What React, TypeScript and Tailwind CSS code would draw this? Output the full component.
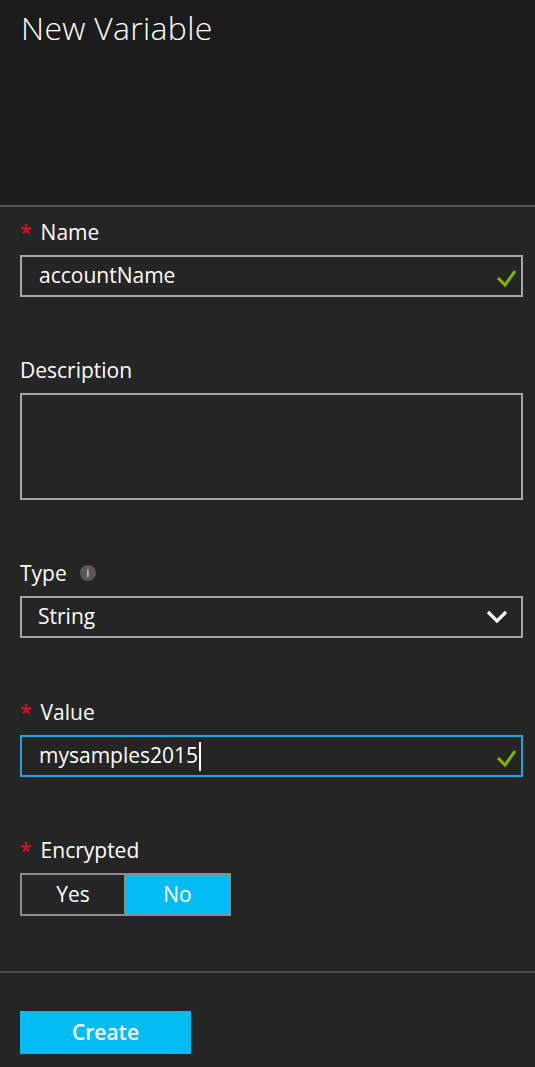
import React from "react";

function Check() {
  return (
    <svg width="20" height="18" viewBox="0 0 20 18" className="absolute right-[5px] top-[12px]">
      <polyline points="2,9 9,16 19,2" fill="none" stroke="#7fba00" strokeWidth="3" />
    </svg>
  );
}

function Label({ text, required, info }: { text: string; required?: boolean; info?: boolean }) {
  return (
    <div className="flex items-center h-[28px] leading-[28px] mb-[9px] text-[21px] text-white">
      {required && <span className="text-[#e81123] mr-[9px] text-[21px]">*</span>}
      <span>{text}</span>
      {info && (
        <span className="ml-[13px] w-[16px] h-[16px] rounded-full bg-[#595959] text-[#d0d0d0] text-[11px] leading-[16px] text-center font-semibold">
          i
        </span>
      )}
    </div>
  );
}

export default function App() {
  return (
    <div
      className="w-[535px] h-[1067px] bg-[#252525] text-white overflow-hidden"
      style={{ fontFamily: '"Open Sans", "Noto Sans", sans-serif' }}
    >
      {/* Blade header */}
      <div className="h-[207px] bg-[#1b1b1b] px-[21px] pt-[8px] border-b-2 border-[#555555]">
        <h1 className="text-[32px] leading-[40px] font-light tracking-[0.3px]">New Variable</h1>
      </div>

      <div className="pl-[20px] pr-[12px] pt-[11px]">
        {/* Name */}
        <Label text="Name" required />
        <div className="relative h-[42px] border-2 border-[#a6a6a6] pl-[17px] flex items-center text-[21px]">
          accountName
          <Check />
        </div>

        {/* Description */}
        <div className="mt-[59px]">
          <Label text="Description" />
          <div className="h-[107px] border-2 border-[#a6a6a6]" />
        </div>

        {/* Type */}
        <div className="mt-[59px]">
          <Label text="Type" info />
          <div className="relative h-[42px] border-2 border-[#a6a6a6] pl-[16px] flex items-center justify-between text-[21px]">
            <span>String</span>
            <svg width="22" height="14" viewBox="0 0 22 14" className="mr-[13px]">
              <polyline points="2,2 11,11 20,2" fill="none" stroke="#ffffff" strokeWidth="3.2" />
            </svg>
          </div>
        </div>

        {/* Value */}
        <div className="mt-[60px]">
          <Label text="Value" required />
          <div className="relative h-[42px] border-2 border-[#1ba7df] pl-[17px] flex items-center text-[21px]">
            <span>mysamples2015</span>
            <span className="inline-block w-[1.5px] h-[29px] bg-white ml-[1px]" />
            <Check />
          </div>
        </div>

        {/* Encrypted */}
        <div className="mt-[59px]">
          <Label text="Encrypted" required />
          <div className="flex w-[211px] h-[43px] border-2 border-[#8c8c8c] text-[21px]">
            <div className="w-[104px] flex items-center justify-center border-r-2 border-[#8c8c8c]">Yes</div>
            <div className="flex-1 flex items-center justify-center bg-[#00bcf2]">No</div>
          </div>
        </div>
      </div>

      {/* Footer */}
      <div className="mt-[55px] border-t-2 border-[#4d4d4d] px-[20px] pt-[38px]">
        <button className="w-[171px] h-[43px] bg-[#00bcf2] text-white text-[21px] font-semibold">
          Create
        </button>
      </div>
    </div>
  );
}
